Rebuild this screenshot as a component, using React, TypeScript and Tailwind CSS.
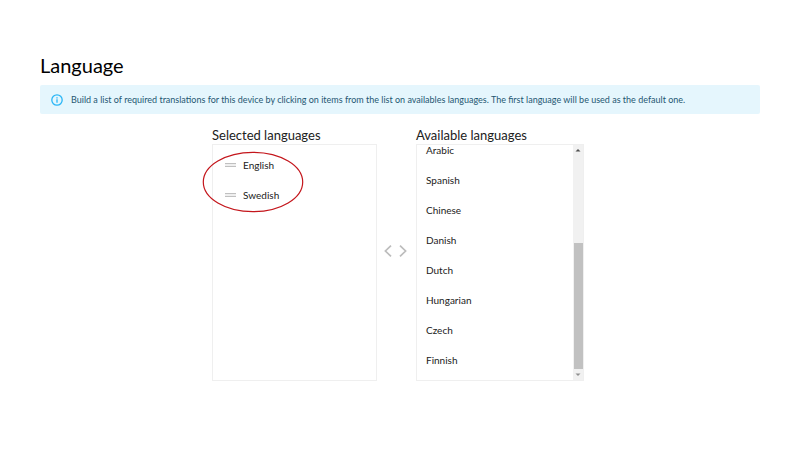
import { useState } from 'react';

const selectedLanguages = ['English', 'Swedish'];

const availableLanguages = [
  'Arabic',
  'Spanish',
  'Chinese',
  'Danish',
  'Dutch',
  'Hungarian',
  'Czech',
  'Finnish',
];

function InfoIcon() {
  return (
    <svg className="h-3 w-3 shrink-0" viewBox="0 0 12 12" fill="none" stroke="#29b6f6" aria-hidden="true">
      <circle cx="6" cy="6" r="5.2" strokeWidth="1.3" />
      <path d="M6 5.3v3.4M6 3.2v1.2" strokeWidth="1.3" />
    </svg>
  );
}

function DragHandle() {
  return (
    <svg className="h-1 w-[11px] shrink-0" viewBox="0 0 11 4" aria-hidden="true">
      <path d="M0 .6h11M0 3.4h11" stroke="#c0c0c0" strokeWidth="1.2" />
    </svg>
  );
}

function Scrollbar() {
  return (
    <div className="flex w-[10px] shrink-0 flex-col bg-[#f1f1f1]" aria-hidden="true">
      <svg className="h-[10px] w-[10px]" viewBox="0 0 10 10">
        <path d="M2.5 6.5 5 4l2.5 2.5z" fill="#505050" />
      </svg>
      <div className="grow-[88]" />
      <div className="ml-px grow-[126] bg-[#c1c1c1]" />
      <svg className="h-[11px] w-[10px]" viewBox="0 0 10 11">
        <path d="M2.5 4.5 5 7l2.5-2.5z" fill="#8f8f8f" />
      </svg>
    </div>
  );
}

export default function LanguagePage() {
  const [selected, setSelected] = useState(selectedLanguages);
  const [available, setAvailable] = useState(availableLanguages);

  const addLanguage = (language: string) => {
    setAvailable(available.filter((item) => item !== language));
    setSelected([...selected, language]);
  };

  const removeLanguage = (language: string) => {
    setSelected(selected.filter((item) => item !== language));
    setAvailable([...available, language]);
  };

  return (
    <main className="min-h-screen bg-white px-10 pt-[50px] pb-10 font-['Lato',sans-serif] text-[#212121]">
      <h1 className="text-[20px] leading-[30px] text-black">Language</h1>

      <div className="mt-[5px] flex min-h-[29px] items-center gap-2 rounded-xs bg-[#e5f6fd] px-[11px] text-[#1f5672]">
        <InfoIcon />
        <p className="text-[9px] leading-3">
          Build a list of required translations for this device by clicking on items from the list on availables
          languages. The first language will be used as the default one.
        </p>
      </div>

      <div className="mt-[13px] flex justify-center pr-1">
        <section className="w-[165px]">
          <h2 className="text-[13px] leading-4">Selected languages</h2>
          <div className="relative mt-px h-[237px] border border-[#efefef] pt-[5px]">
            <ul>
              {selected.map((language) => (
                <li key={language}>
                  <button
                    type="button"
                    className="flex h-[30px] w-full items-center gap-[7px] pl-3 text-left text-[10px]"
                    onClick={() => removeLanguage(language)}
                  >
                    <DragHandle />
                    {language}
                  </button>
                </li>
              ))}
            </ul>
            {/* Highlight around the chosen languages */}
            <svg
              className="pointer-events-none absolute top-[6px] -left-[11px] h-[62px] w-[102px]"
              viewBox="0 0 102 62"
              fill="none"
              aria-hidden="true"
            >
              <ellipse cx="51" cy="31" rx="49.7" ry="29.7" stroke="#c4161c" strokeWidth="1.2" />
            </svg>
          </div>
        </section>

        <div className="flex w-[39px] items-center justify-center gap-[7px] pr-[3px] pb-1.5">
          <button type="button" aria-label="Remove language" onClick={() => selected.length && removeLanguage(selected[selected.length - 1])}>
            <svg className="h-3 w-2" viewBox="0 0 8 12" fill="none" stroke="#bdbdbd" strokeWidth="1.7">
              <path d="M7 .6 1.4 6 7 11.4" />
            </svg>
          </button>
          <button type="button" aria-label="Add language" onClick={() => available.length && addLanguage(available[0])}>
            <svg className="h-3 w-2" viewBox="0 0 8 12" fill="none" stroke="#bdbdbd" strokeWidth="1.7">
              <path d="M1 .6 6.6 6 1 11.4" />
            </svg>
          </button>
        </div>

        <section className="w-[168px]">
          <h2 className="text-[13px] leading-4">Available languages</h2>
          <div className="mt-px flex h-[237px] border border-[#efefef]">
            <ul className="flex grow flex-col justify-end overflow-hidden pb-[5px]">
              {available.map((language) => (
                <li key={language} className="shrink-0">
                  <button
                    type="button"
                    className="flex h-[30px] w-full items-center pl-[9px] text-left text-[10px]"
                    onClick={() => addLanguage(language)}
                  >
                    {language}
                  </button>
                </li>
              ))}
            </ul>
            <Scrollbar />
          </div>
        </section>
      </div>
    </main>
  );
}
